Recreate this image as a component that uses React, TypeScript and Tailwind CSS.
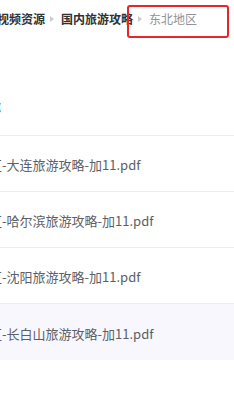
import React from 'react'

const files = [
  '大连旅游攻略-加11.pdf',
  '哈尔滨旅游攻略-加11.pdf',
  '沈阳旅游攻略-加11.pdf',
  '长白山旅游攻略-加11.pdf',
]

function Sep() {
  return (
    <span className="mx-[5px] inline-block h-0 w-0 border-y-[3.5px] border-l-[4px] border-y-transparent border-l-[#c8cbd2]" />
  )
}

export default function App() {
  return (
    <div
      className="relative h-[420px] w-[234px] overflow-hidden bg-white"
      style={{ fontFamily: '"Microsoft YaHei", "Noto Sans CJK SC", sans-serif' }}
    >
      {/* breadcrumb */}
      <div className="flex h-[37px] items-center whitespace-nowrap text-[12px] leading-none">
        <span className="ml-[-3px] font-semibold text-[#303133]">视频资源</span>
        <Sep />
        <span className="ml-[2px] font-semibold text-[#303133]">国内旅游攻略</span>
        <Sep />
        <span className="ml-[2px] text-[#909399]">东北地区</span>
      </div>
      <div className="absolute left-[127px] top-[5px] h-[33px] w-[102px] rounded-[3px] border-2 border-[#e8252b]" />

      {/* table */}
      <div className="mt-[43px]">
        <div className="flex h-[56px] items-center border-b border-[#ebeef5] whitespace-nowrap">
          <span className="ml-[-27px] text-[14px] font-semibold text-[#4a7bb0]">名称</span>
        </div>
        {files.map((f, i) => (
          <div
            key={f}
            className={
              'flex h-[56px] items-center whitespace-nowrap pt-[3px] text-[13px] text-[#5c5f66] ' +
              (i === files.length - 1 ? 'bg-[#f7f7fd]' : 'border-b border-[#ebeef5]')
            }
          >
            <span className="ml-[-50px]">东北地区</span>
            <span>-{f}</span>
          </div>
        ))}
      </div>
    </div>
  )
}
